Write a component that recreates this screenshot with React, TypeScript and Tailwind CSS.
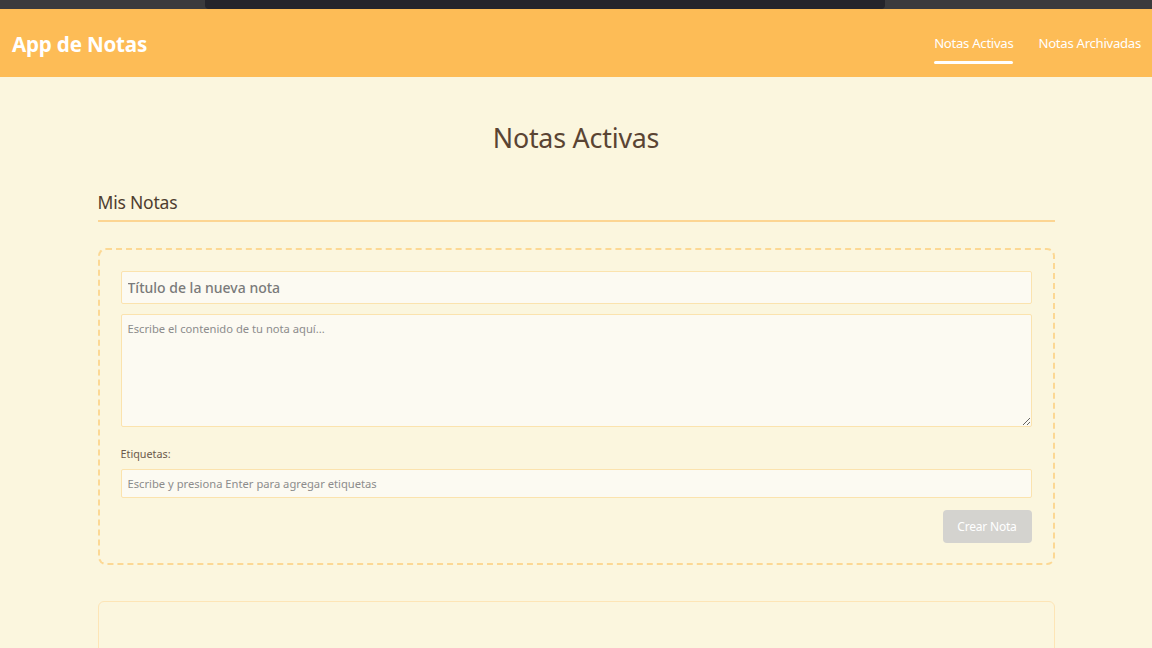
import React from "react";

export default function App() {
  return (
    <div
      className="w-[1152px] h-[648px] overflow-hidden flex flex-col bg-[#fbf6de]"
      style={{ fontFamily: '"Noto Sans", "Open Sans", sans-serif' }}
    >
      <div className="h-[9px] shrink-0 flex bg-[#3b3b3d]">
        <div className="w-[205px]" />
        <div className="w-[680px] bg-[#25252b] rounded-bl-[4px] rounded-br-[4px]" />
      </div>
      <header className="h-[68px] shrink-0 bg-[#fdbc56] flex items-center justify-between pl-[12px] pr-[11px]">
        <div className="text-white font-bold text-[20.6px] tracking-[-0.2px] pt-[2px]">App de Notas</div>
        <nav className="flex items-center gap-[25px] text-[13.2px] text-white tracking-[-0.3px]">
          <div className="relative pt-[1px]">
            Notas Activas
            <div className="absolute left-0 right-0 top-[28px] h-[3px] rounded-full bg-white" />
          </div>
          <div className="pt-[1px]">Notas Archivadas</div>
        </nav>
      </header>
      <main className="flex-1 flex flex-col items-center">
        <h1 className="mt-[42px] text-[26.8px] leading-[38px] text-[#5a4433] tracking-[-0.2px]">Notas Activas</h1>
        <div className="w-[957px] mt-[33px]">
          <h2 className="text-[17.5px] leading-[24px] text-[#4e3d2f] pb-[6px] border-b-2 border-[#fcd592] tracking-[-0.2px]">
            Mis Notas
          </h2>
          <div className="mt-[26px] h-[317px] border-2 border-dashed border-[#fcd894] rounded-[8px] px-[21px] pt-[21px]">
            <input
              className="w-full h-[33px] px-[6px] bg-[#fcfaf2] border border-[#fbe3ae] rounded-[2px] text-[14px] text-[#777777] placeholder:text-[#7a7a7a] font-medium outline-none"
              placeholder="Título de la nueva nota"
            />
            <textarea
              className="mt-[10px] block w-full h-[113px] px-[6px] py-[6px] bg-[#fcfaf2] border border-[#fbe3ae] rounded-[2px] text-[11.2px] placeholder:text-[#8c8c8c] outline-none"
              placeholder="Escribe el contenido de tu nota aquí..."
            />
            <div className="mt-[19px] text-[10.8px] text-[#6b5a4c]">Etiquetas:</div>
            <input
              className="mt-[7px] w-full h-[29px] px-[6px] bg-[#fcfaf2] border border-[#fbe3ae] rounded-[2px] text-[11.2px] placeholder:text-[#8c8c8c] outline-none"
              placeholder="Escribe y presiona Enter para agregar etiquetas"
            />
            <div className="flex justify-end mt-[12px]">
              <button className="w-[89px] h-[33px] rounded-[4px] bg-[#d4d3cf] text-white text-[12px] tracking-[-0.2px]">
                Crear Nota
              </button>
            </div>
          </div>
          <div className="mt-[36px] h-[60px] border border-[#fde5b6] rounded-[6px]" />
        </div>
      </main>
      <div className="h-[2px] shrink-0 bg-[#4a4a4a]" />
    </div>
  );
}
